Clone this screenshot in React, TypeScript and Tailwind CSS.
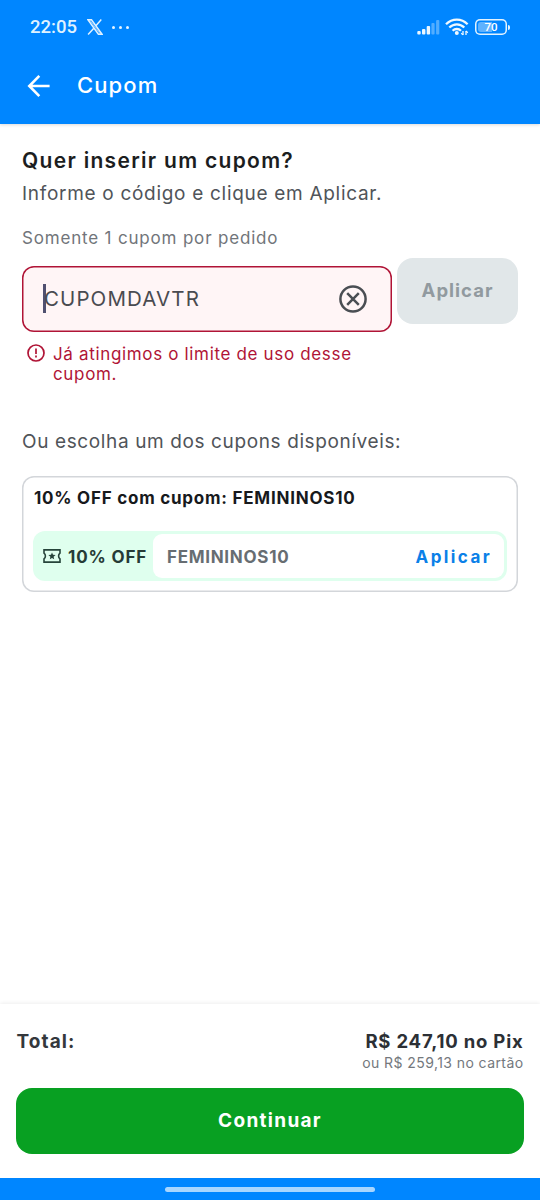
function XLogo() {
  return (
    <svg width="16" height="16" viewBox="0 0 16 16" fill="none" stroke="#dff1ff" strokeWidth="1.5">
      <path d="M0.9 0.8h3.6L15 15.2h-3.6z" />
      <path d="M14.3 0.6 8.9 6.7M6.8 9.2 1.1 15.4" />
      <path d="m2.7 1 10.5 14" strokeWidth="0.9" opacity="0.7" />
    </svg>
  );
}

function SignalIcon() {
  return (
    <svg width="23" height="16" viewBox="0 0 23 16" fill="#eaf6ff">
      <rect x="0.3" y="12" width="3.4" height="3.5" rx="1" />
      <rect x="5" y="10" width="3.4" height="5.5" rx="1" />
      <rect x="9.7" y="7" width="3.4" height="8.5" rx="1" />
      <rect x="14.4" y="4" width="3.2" height="11.5" rx="1" opacity="0.35" />
      <rect x="19.1" y="1" width="3.2" height="14.5" rx="1" opacity="0.35" />
    </svg>
  );
}

function WifiIcon() {
  return (
    <svg width="24" height="18" viewBox="0 0 24 18" fill="none" stroke="#f0f9ff" strokeWidth="2.3">
      <path d="M1 6.2C7.2 0 16.5 0 22.6 6.2" />
      <path d="M4.3 9.5c4.4-4.3 10.7-4.3 15 0" />
      <path d="M7.6 12.8c2.4-2.4 6-2.4 8.4 0" />
      <circle cx="11.8" cy="15" r="2" fill="#f0f9ff" stroke="none" />
      <path d="M18 12.9v4.2M21 12.9v4.2" strokeWidth="1.3" />
      <path d="m16.2 15.2 1.8 1.7M21 13l1.8 1.7" strokeWidth="1.2" />
    </svg>
  );
}

function BatteryIcon() {
  return (
    <div className="flex items-center gap-px">
      <div className="relative flex h-[16px] w-[32px] items-center justify-center overflow-hidden rounded-[5px] shadow-[inset_0_0_0_1.5px_#e3f3ff]">
        <div className="absolute inset-y-[3px] left-[3px] w-[14px] rounded-l-[3px] bg-[#5fb2ff]" />
        <span className="relative pt-px font-['Roboto',sans-serif] text-[11.5px] leading-none font-medium text-white">
          70
        </span>
      </div>
      <div className="h-[5px] w-[2px] rounded-r-sm bg-[#e3f3ff]" />
    </div>
  );
}

function BackArrow() {
  return (
    <svg width="24" height="24" viewBox="0 0 24 24" fill="none" stroke="#fff" strokeWidth="2.6">
      <path d="M12.3 1.8 2.3 12l10 10.2M2.3 12H22.6" />
    </svg>
  );
}

function ClearIcon() {
  return (
    <svg width="28" height="28" viewBox="0 0 28 28" fill="none" stroke="#4a4e53" strokeWidth="2.5">
      <circle cx="14" cy="14" r="12.6" />
      <path d="m8.2 8.2 11.6 11.6M19.8 8.2 8.2 19.8" />
    </svg>
  );
}

function AlertIcon() {
  return (
    <svg width="18" height="18" viewBox="0 0 18 18" fill="none" stroke="#b01436" strokeWidth="1.7">
      <circle cx="9" cy="9" r="8" />
      <path d="M9 4.5v5.4M9 11.4v2" />
    </svg>
  );
}

function TicketIcon() {
  return (
    <svg width="18" height="14" viewBox="0 0 18 14" fill="none" stroke="#26443a" strokeWidth="1.6">
      <path d="M1 0.9h16v3.2c-1.9 1.3-1.9 4.5 0 5.8v3.2H1V9.9c1.9-1.3 1.9-4.5 0-5.8z" />
      <path
        d="m9 3.4 1 2.4 2.6.2-2 1.7.6 2.5L9 8.9l-2.2 1.3.6-2.5-2-1.7L8 5.8z"
        fill="#26443a"
        stroke="none"
      />
    </svg>
  );
}

function Header() {
  return (
    <header className="h-[124px] shrink-0 bg-[#0086ff] shadow-[0_1px_3px_rgba(0,0,0,0.15)]">
      <div className="flex h-[54px] items-center justify-between pr-[30px] pl-[30px]">
        <div className="flex items-center">
          <span className="w-[57px] pt-[2px] font-['Roboto',sans-serif] text-[18.5px] font-medium text-[#dff2ff]">
            22:05
          </span>
          <XLogo />
          <div className="ml-[9px] flex gap-[4px]">
            <i className="size-[3px] rounded-full bg-[#e6f5ff]" />
            <i className="size-[3px] rounded-full bg-[#e6f5ff]" />
            <i className="size-[3px] rounded-full bg-[#e6f5ff]" />
          </div>
        </div>
        <div className="flex items-center">
          <SignalIcon />
          <div className="mr-[6px] ml-[5px]">
            <WifiIcon />
          </div>
          <BatteryIcon />
        </div>
      </div>
      <div className="flex h-[63px] items-center pl-[27px]">
        <BackArrow />
        <h1 className="ml-[26px] text-[22px] font-medium tracking-[1.1px] text-white">Cupom</h1>
      </div>
    </header>
  );
}

function CouponForm() {
  return (
    <section>
      <h2 className="text-[21px] leading-6 font-semibold tracking-[1.3px] whitespace-nowrap text-[#1b1d20]">
        Quer inserir um cupom?
      </h2>
      <p className="mt-[9px] text-[19px] leading-6 tracking-[0.7px] whitespace-nowrap text-[#505459]">
        Informe o código e clique em Aplicar.
      </p>
      <p className="mt-[22px] text-[17px] leading-5 tracking-[0.82px] whitespace-nowrap text-[#71757a]">
        Somente 1 cupom por pedido
      </p>

      <div className="mt-[10px] flex justify-between">
        <div className="mt-[7.5px] flex h-[66px] w-[370px] items-center justify-between rounded-[12px] bg-[#fff5f6] pr-[25px] pl-[21px] shadow-[inset_0_0_0_1.5px_#b01436]">
          <div className="flex items-center">
            <span className="h-[29px] w-[3px] bg-[#505070]" />
            <span className="-ml-[2px] pt-px text-[20.5px] tracking-[1.1px] text-[#4a4b50]">CUPOMDAVTR</span>
          </div>
          <button type="button" aria-label="Limpar">
            <ClearIcon />
          </button>
        </div>
        <button
          type="button"
          disabled
          className="h-[66px] w-[121px] rounded-[16px] bg-[#e1e7e9] text-[18.5px] font-bold tracking-[1px] text-[#919a9f]"
        >
          Aplicar
        </button>
      </div>

      <div className="mt-[12.5px] flex gap-[8px] pl-[5px] text-[#b01436]">
        <AlertIcon />
        <p className="text-[17px] leading-5 tracking-[0.66px] whitespace-nowrap">
          Já atingimos o limite de uso desse
          <br />
          cupom.
        </p>
      </div>
    </section>
  );
}

function CouponCard({ title, discount, code }: { title: string; discount: string; code: string }) {
  return (
    <article className="mt-[22px] h-[116px] rounded-[12px] px-[11px] pt-[12px] shadow-[inset_0_0_0_1.5px_#d3d6da]">
      <h3 className="pl-px text-[17px] leading-5 font-bold tracking-[0.76px] whitespace-nowrap text-[#17191c]">
        {title}
      </h3>
      <div className="mt-[23px] flex h-[50px] items-center rounded-[12px] bg-[#dfffee] p-[3px]">
        <div className="flex w-[117px] shrink-0 items-center gap-[7px] pl-[7px]">
          <TicketIcon />
          <span className="pt-[3px] text-[17px] font-bold tracking-[0.85px] whitespace-nowrap text-[#263b36]">
            {discount}
          </span>
        </div>
        <div className="flex h-full flex-1 items-center justify-between rounded-[9px] bg-white pt-[3px] pr-[12px] pl-[14px]">
          <span className="text-[17px] font-bold tracking-[0.7px] text-[#676d72]">{code}</span>
          <button type="button" className="text-[17px] font-bold tracking-[2.4px] text-[#0a80e8]">
            Aplicar
          </button>
        </div>
      </div>
    </article>
  );
}

function Footer() {
  return (
    <footer className="h-[174px] bg-white px-[16px] pt-[25px] shadow-[0_-1px_4px_rgba(0,0,0,0.07)]">
      <div className="flex h-[58.5px] justify-between px-[0.5px]">
        <span className="pt-px text-[19px] leading-6 font-bold tracking-[1.1px] text-[#34383c]">Total:</span>
        <div className="flex flex-col items-end whitespace-nowrap">
          <strong className="text-[18.5px] leading-6 font-bold tracking-[0.8px] text-[#2c3035]">
            R$ 247,10 no Pix
          </strong>
          <span className="text-[14px] leading-5 tracking-[0.42px] text-[#74787d]">
            ou R$ 259,13 no cartão
          </span>
        </div>
      </div>
      <button
        type="button"
        className="h-[66px] w-full rounded-[16px] bg-[#08a022] pt-[2px] text-[19px] font-bold tracking-[1.3px] text-white"
      >
        Continuar
      </button>
    </footer>
  );
}

export default function App() {
  return (
    <div className="flex h-[1200px] w-[540px] flex-col overflow-hidden bg-white font-['Inter',sans-serif]">
      <Header />
      <main className="flex-1 px-[22px] pt-[25px]">
        <CouponForm />
        <p className="mt-[46px] text-[19px] leading-6 tracking-[0.62px] whitespace-nowrap text-[#505459]">
          Ou escolha um dos cupons disponíveis:
        </p>
        <CouponCard title="10% OFF com cupom: FEMININOS10" discount="10% OFF" code="FEMININOS10" />
      </main>
      <Footer />
      <div className="flex h-[22px] shrink-0 items-center justify-center bg-[#0086ff]">
        <div className="h-[5px] w-[210px] rounded-full bg-[#a8d6ff]" />
      </div>
    </div>
  );
}
